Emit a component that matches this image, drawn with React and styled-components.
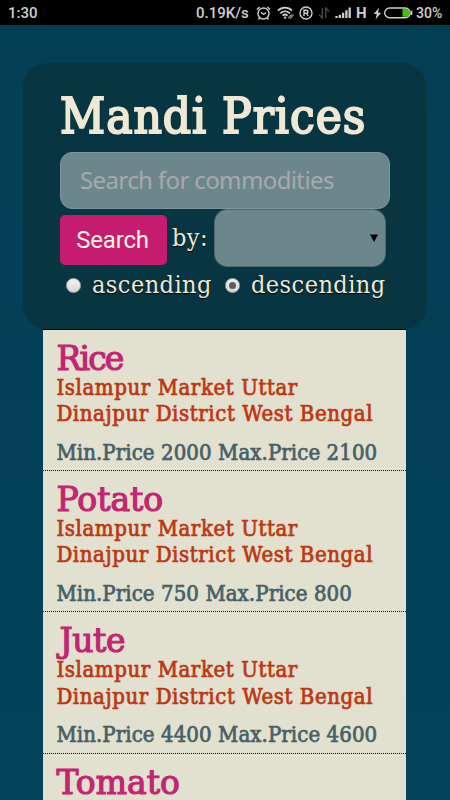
import React, { useState } from 'react';
import styled, { createGlobalStyle } from 'styled-components';

const GlobalStyle = createGlobalStyle`
    * {
        box-sizing: border-box;
    }

    body {
        margin: 0;
        overflow: hidden;
        background: #034056;
    }
`;

const slab = `'DejaVu Serif Condensed', 'DejaVu Serif', serif`;

const Screen = styled.div`
    width: 450px;
    height: 800px;
    overflow: hidden;
    display: flex;
    flex-direction: column;
    background: linear-gradient(#033e54, #03435b);
`;

const StatusBar = styled.div`
    flex: none;
    height: 25px;
    padding: 1px 8px 0;
    display: flex;
    align-items: center;
    background: #000;
    color: #cecece;
    font: 500 15px/24px Roboto, sans-serif;

    svg {
        flex: none;
        display: block;
    }
`;

const StatusText = styled.span`
    width: ${(props) => props.$width}px;
    margin-left: ${(props) => props.$gap || 0}px;
    font-size: ${(props) => props.$size || 15}px;
    font-weight: ${(props) => props.$weight || 500};
    white-space: nowrap;
`;

const StatusIcon = styled.svg`
    margin-left: ${(props) => props.$gap}px;
    fill: none;
    stroke: #cecece;
    stroke-width: 1.4;
`;

const Panel = styled.header`
    flex: none;
    width: 404px;
    height: 267px;
    margin: 38px 0 0 23px;
    padding: 24px 37px 0;
    border-radius: 25px;
    background: #073642;
    color: #eee8d5;
`;

const Title = styled.h1`
    margin: 0;
    height: 65px;
    font: 400 49px/60px ${slab};
    letter-spacing: 1px;
    white-space: nowrap;
    -webkit-text-stroke: 2px #eee8d5;
    text-shadow: 0 1px 1px #000;
`;

const SearchInput = styled.input`
    display: block;
    width: 330px;
    height: 57px;
    padding: 0 19px 2px;
    border: 1.5px solid #7d979c;
    border-radius: 12px;
    outline: none;
    background: #6b878c;
    color: #eee8d5;
    font: 24px 'Noto Sans', sans-serif;
    letter-spacing: -0.62px;

    &::placeholder {
        color: #a9a9a9;
        opacity: 1;
    }
`;

const SearchRow = styled.div`
    display: flex;
    align-items: center;
    height: 58px;
`;

const SearchButton = styled.button`
    width: 107px;
    height: 50px;
    margin-top: 4px;
    padding: 0 2px 0 0;
    border: 0;
    border-radius: 5px;
    background: #c61c6f;
    color: #fdf6e3;
    font: 24px Roboto, sans-serif;
    letter-spacing: -0.2px;
`;

const Label = styled.span`
    width: ${(props) => props.$width}px;
    margin-left: ${(props) => props.$gap}px;
    font: 25px/32px ${slab};
    letter-spacing: 0.45px;
    text-shadow: 0 1px 1px #000;
    white-space: nowrap;
`;

const SelectBox = styled.div`
    display: flex;
    align-items: center;
    justify-content: flex-end;
    width: 172px;
    height: 58px;
    margin-left: 5px;
    padding-right: 7px;
    border: 1.5px solid #4f676d;
    border-radius: 13px;
    background: #6b878c;
`;

const OrderRow = styled.div`
    display: flex;
    align-items: center;
    height: 36px;
`;

const Radio = styled.button`
    flex: none;
    display: flex;
    align-items: center;
    justify-content: center;
    width: 15px;
    height: 15px;
    margin-left: ${(props) => props.$gap}px;
    padding: 0;
    border: 1px solid #aaa;
    border-radius: 50%;
    background: linear-gradient(#f2f2f2, #d6d6d6);

    &::after {
        content: '';
        width: 7px;
        height: 7px;
        border-radius: 50%;
        background: ${(props) => (props.$checked ? '#5c5c5c' : 'transparent')};
    }
`;

const List = styled.ul`
    flex: none;
    width: 363px;
    margin: -1px 0 0 43.4px;
    padding: 0;
    border-top: 1px solid #000;
    list-style: none;
    background: #e2e0ce;
    font-family: ${slab};
`;

const Item = styled.li`
    height: 141.2px;
    padding: 12px 0 0 13px;
    border-bottom: 1px dotted #111;
    white-space: nowrap;
`;

const Name = styled.h2`
    margin: 0 0 0 ${(props) => props.$indent || 0}px;
    height: 33px;
    font: 400 33px/33px 'DejaVu Serif', serif;
    color: #c32573;
    -webkit-text-stroke: 1.2px #c32573;
    letter-spacing: ${(props) => props.$spacing || 0}px;
`;

const Market = styled.p`
    margin: 0;
    font-size: 22px;
    line-height: 26.3px;
    color: #bd3712;
    -webkit-text-stroke: 0.7px #bd3712;
    letter-spacing: 0.58px;
`;

const Price = styled.p`
    margin: 12px 0 0;
    font-size: 22px;
    line-height: 26px;
    color: #476068;
    -webkit-text-stroke: 0.7px #476068;
    letter-spacing: 0.08px;
`;

const commodities = [
    { name: 'Rice', min: 2000, max: 2100, spacing: -1.8 },
    { name: 'Potato', min: 750, max: 800 },
    { name: 'Jute', min: 4400, max: 4600, indent: 3, spacing: -0.4 },
    { name: 'Tomato', min: 1200, max: 1400 },
];

const PhoneStatus = () => (
    <StatusBar>
        <StatusText $width={30}>1:30</StatusText>
        <StatusText $width={54} $gap={158}>0.19K/s</StatusText>
        <StatusIcon $gap={6} width="15" height="15" viewBox="0 0 15 15">
            <circle cx="7.5" cy="7.5" r="5.5" />
            <path d="M4.8 6.2l2.7 2 2.4-1.4M.8 3.5L3.6 1M11.4 1l2.8 2.5M3.7 12l-1.2 1.5M11.3 12l1.2 1.5" />
        </StatusIcon>
        <StatusIcon $gap={6} width="18" height="14" viewBox="0 0 18 14">
            <path d="M1 4.7c4-4 10-4 14 0M3.3 7.3c2.8-2.7 6.8-2.7 9.6 0M5.6 9.7c1.5-1.4 3.5-1.4 5 0" strokeWidth="1.8" />
            <circle cx="8.1" cy="11.6" r="1.2" fill="#cecece" stroke="none" />
            <path d="M11 12.3l3.8-4.1M13 12.7l3.6-4" stroke="#888" />
        </StatusIcon>
        <StatusIcon $gap={4} width="14" height="14" viewBox="0 0 14 14">
            <circle cx="7" cy="7" r="6" />
            <path d="M5 10V4.3h2.5a1.5 1.5 0 0 1 0 3H5m2.5 0L9.2 10" />
        </StatusIcon>
        <StatusIcon $gap={5} width="12" height="12" viewBox="0 0 12 12">
            <path d="M4.3 1v10L1 7.5M7.7 11V1L11 4.5" stroke="#444" strokeWidth="1.6" />
        </StatusIcon>
        <StatusIcon $gap={5} width="17" height="12" viewBox="0 0 17 12">
            <path d="M1.5 11V9M4.8 11V7.8M8.1 11V5.8M11.4 11V3.2M14.7 11V.5" strokeWidth="2.3" />
        </StatusIcon>
        <StatusText $width={12} $gap={4} $weight={700}>H</StatusText>
        <StatusIcon $gap={5} width="9" height="13" viewBox="0 0 9 13">
            <path d="M6 .5L.8 7h3L2.5 12.5 8.2 5.7H5z" fill="#cecece" stroke="none" />
        </StatusIcon>
        <StatusIcon $gap={2} width="29" height="12" viewBox="0 0 29 12">
            <rect x=".7" y="1" width="25.5" height="9.8" rx="4.9" />
            <path d="M18.5 2h3.3a3.9 3.9 0 0 1 0 7.8h-3.3z" fill="#45c400" stroke="none" />
            <path d="M27.6 3.8v4.2" />
        </StatusIcon>
        <StatusText $width={26} $gap={3} $size={14}>30%</StatusText>
    </StatusBar>
);

const App = () => {
    const [query, setQuery] = useState('');
    const [order, setOrder] = useState('descending');

    return (
        <Screen>
            <GlobalStyle />
            <PhoneStatus />
            <Panel>
                <Title>Mandi Prices</Title>
                <SearchInput
                    placeholder="Search for commodities"
                    value={query}
                    onChange={(e) => setQuery(e.target.value)}
                />
                <SearchRow>
                    <SearchButton>Search</SearchButton>
                    <Label $width={37} $gap={5}>by:</Label>
                    <SelectBox>
                        <svg width="8" height="8" viewBox="0 0 8 8">
                            <path d="M0 .5h8L4 8z" fill="#000" />
                        </svg>
                    </SelectBox>
                </SearchRow>
                <OrderRow>
                    <Radio $gap={6} $checked={order === 'ascending'} onClick={() => setOrder('ascending')} />
                    <Label $width={120} $gap={11}>ascending</Label>
                    <Radio $gap={13} $checked={order === 'descending'} onClick={() => setOrder('descending')} />
                    <Label $width={136} $gap={11}>descending</Label>
                </OrderRow>
            </Panel>
            <List>
                {commodities.map((item) => (
                    <Item key={item.name}>
                        <Name $spacing={item.spacing} $indent={item.indent}>{item.name}</Name>
                        <Market>Islampur Market Uttar</Market>
                        <Market>Dinajpur District West Bengal</Market>
                        <Price>
                            Min.Price {item.min} Max.Price {item.max}
                        </Price>
                    </Item>
                ))}
            </List>
        </Screen>
    );
};

export default App;
